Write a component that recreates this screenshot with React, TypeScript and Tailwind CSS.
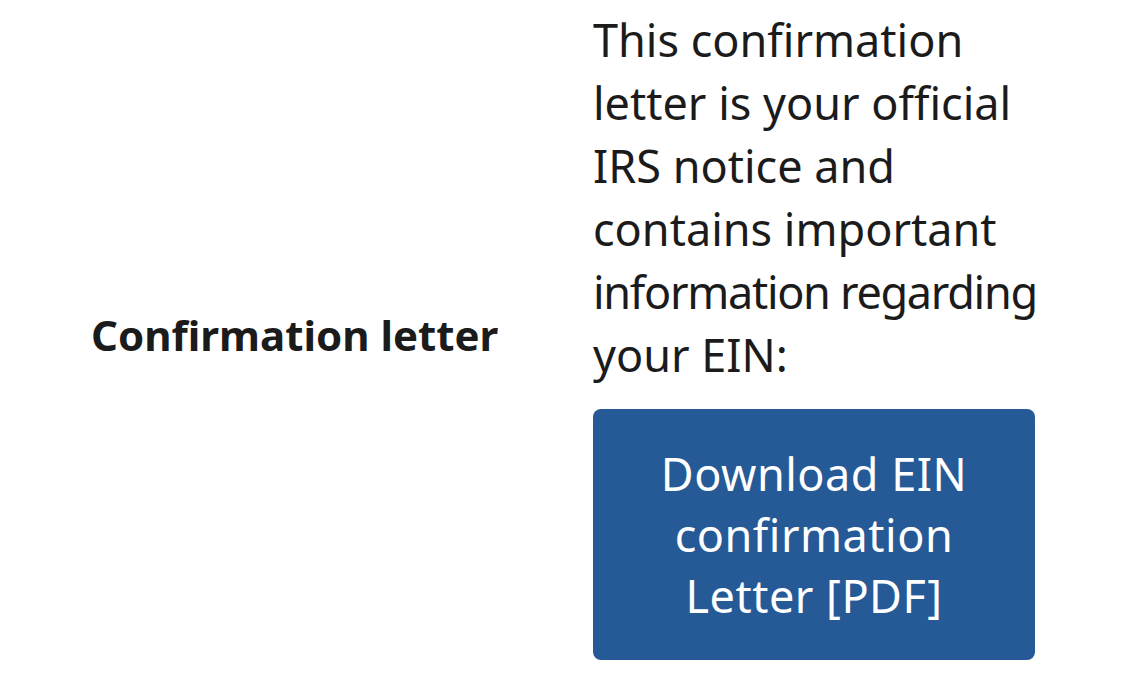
export default function App() {
  return (
    <div className="w-[1125px] h-[681px] overflow-hidden bg-white text-[#1b1b1b] [font-variant-ligatures:none]" style={{ fontFamily: "'Noto Sans', sans-serif" }}>
      <div className="flex h-[668px] items-center">
        <div className="w-[593px] pl-[91px]">
          <div className="text-[42px] font-bold leading-[63px]">Confirmation letter</div>
        </div>
        <div className="w-[442px] pt-[8px] self-start">
          <p className="whitespace-nowrap text-[45px] leading-[63px]">
            This confirmation
            <br />
            letter is your official
            <br />
            IRS notice and
            <br />
            contains important
            <br />
            <span className="tracking-[-1.3px]">information regarding</span>
            <br />
            your EIN:
          </p>
          <a className="mt-[23px] block rounded-[8px] bg-[#255a96] px-[20px] py-[34px] text-center text-[45px] leading-[61px] tracking-[0.5px] text-white">
            Download EIN confirmation Letter [PDF]
          </a>
        </div>
      </div>
    </div>
  );
}
